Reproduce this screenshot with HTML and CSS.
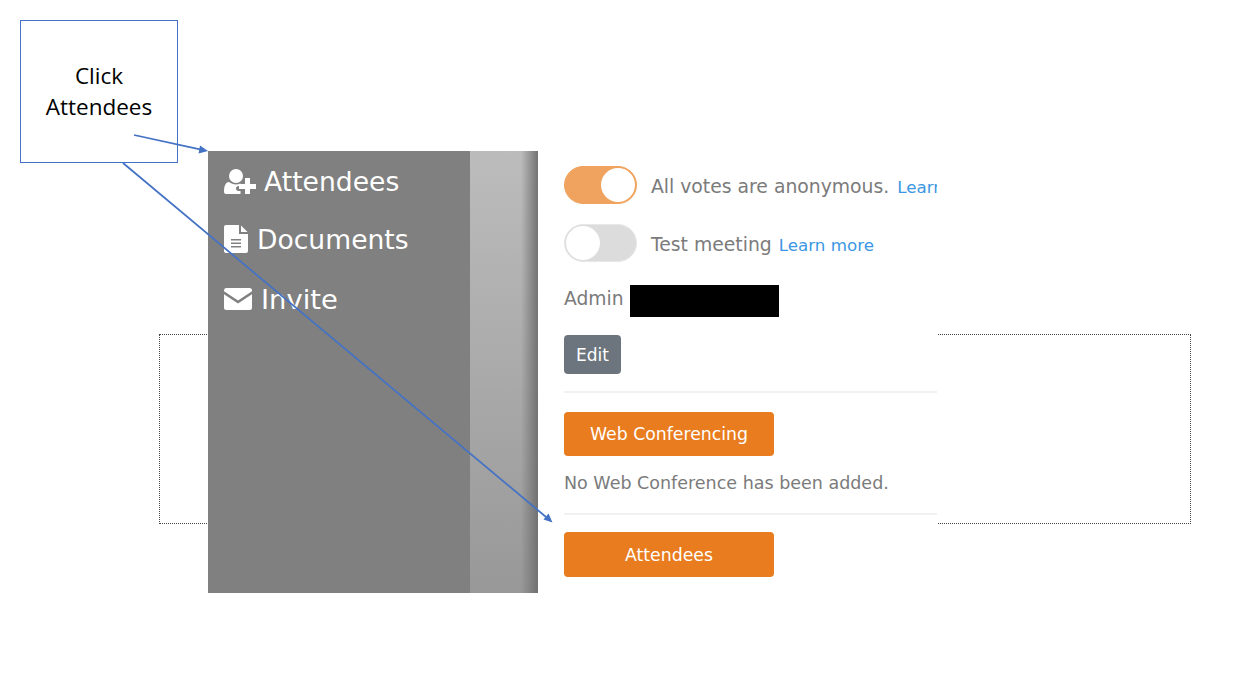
FILE: index.html
```html
<!DOCTYPE html>
<html>
<head>
  <meta charset="utf-8">
  <meta name="viewport" content="width=device-width">
  <title>Click Attendees</title>
  <link rel="stylesheet" href="styles.css">
</head>
<body>
	<div class="slide">
		<div class="dotted-box"></div>
		<div class="callout">Click<br>Attendees</div>

		<div class="shot">
			<div class="side">
				<div class="side-item item-attendees">
					<svg class="icon icon-user" viewBox="0 0 32 25">
						<circle cx="12" cy="7" r="7" fill="#fff"/>
						<path d="M2 25c-1.500 0-2-1-2-2.500 0-5 1.500-9.500 5-9.500 2 1.500 4.500 2.500 7 2.500 1.500 0 3-.3 4.500-1v2.500h-2c-1.500 0-2.500 1-2.500 2.500s1 2.500 2.500 2.500h2V25z" fill="#fff"/>
						<path d="M21 9h5v6h6v5h-6v5h-5v-5h-6v-5h6z" fill="#fff"/>
					</svg>
					<span>Attendees</span>
				</div>
				<div class="side-item item-documents">
					<svg class="icon icon-file" viewBox="0 0 24 28">
						<path fill-rule="evenodd" d="M2 0h13v9h9v17a2 2 0 0 1-2 2H2a2 2 0 0 1-2-2V2a2 2 0 0 1 2-2zM7 14v1.500h10V14zM7 17.500V19h10v-1.500zM7 21v1.500h10V21z" fill="#fff"/>
						<path d="M17 .5L23.500 7H17z" fill="#fff"/>
					</svg>
					<span>Documents</span>
				</div>
				<div class="side-item item-invite">
					<svg class="icon icon-mail" viewBox="0 0 28 22">
						<path d="M2.500 0h23A2.500 2.500 0 0 1 28 2.500v.7L14 12.500 0 3.200v-.7A2.500 2.500 0 0 1 2.500 0z" fill="#fff"/>
						<path d="M0 6.200l14 9.300 14-9.300v13.300a2.500 2.500 0 0 1-2.500 2.500h-23A2.500 2.500 0 0 1 0 19.500z" fill="#fff"/>
					</svg>
					<span>Invite</span>
				</div>
			</div>
			<div class="gutter"></div>
			<div class="content">
				<div class="switch-row row-first">
					<span class="switch on"><i></i></span>
					<span class="switch-label">All votes are anonymous. <a>Learn more</a></span>
				</div>
				<div class="switch-row row-second">
					<span class="switch"><i></i></span>
					<span class="switch-label">Test meeting <a>Learn more</a></span>
				</div>
				<div class="admin-row">
					<span class="admin-label">Admin</span>
					<span class="redacted"></span>
				</div>
				<div class="btn-edit">Edit</div>
				<div class="rule rule-one"></div>
				<div class="btn-orange">Web Conferencing</div>
				<p class="note">No Web Conference has been added.</p>
				<div class="rule rule-two"></div>
				<div class="btn-orange btn-last">Attendees</div>
			</div>
		</div>

		<svg class="arrows" viewBox="0 0 1240 695">
			<line x1="134" y1="135" x2="200" y2="149.300" stroke="#4472c4" stroke-width="1.750"/>
			<path d="M208 151L198.500 153.500L200 145.500z" fill="#4472c4"/>
			<line x1="123" y1="163" x2="546" y2="517" stroke="#4472c4" stroke-width="1.750"/>
			<path d="M552.500 522.500L543.500 519.500L548.500 513.500z" fill="#4472c4"/>
		</svg>
	</div>
</body>
</html>
```

FILE: styles.css
```css
html,body{
	margin:0;
	padding:0;
	background:#FFF;
}
.slide{
	position:relative;
	width:1240px;
	height:695px;
	overflow:hidden;
	background:#FFF;
}
.dotted-box{
	position:absolute;
	left:159px;
	top:334px;
	width:1030px;
	height:188px;
	border:1px dotted #444;
}
.callout{
	position:absolute;
	left:20px;
	top:20px;
	box-sizing:border-box;
	width:158px;
	height:143px;
	padding-bottom:2px;
	display:flex;
	align-items:center;
	justify-content:center;
	border:1px solid #4472c4;
	background:#FFF;
	color:#000;
	font-family:"Open Sans",sans-serif;
	font-size:22.5px;
	line-height:31px;
	text-align:center;
}
.shot{
	position:absolute;
	left:208px;
	top:151px;
	width:729px;
	height:442px;
	display:flex;
	background:#FFF;
	font-family:"DejaVu Sans",sans-serif;
}
.side{
	width:262px;
	background:#808080;
	color:#FFF;
	font-size:26.6px;
}
.side-item{
	display:flex;
	align-items:center;
	height:30px;
	padding-left:16px;
}
.item-attendees{
	margin-top:15px;
}
.item-documents{
	margin-top:28px;
}
.item-invite{
	margin-top:30px;
	font-size:27.4px;
}
.icon{
	flex:none;
}
.icon-user{
	width:32px;
	height:25px;
	margin-right:8px;
}
.icon-file{
	width:24px;
	height:28px;
	margin-right:9px;
}
.icon-mail{
	width:28px;
	height:22px;
	margin-right:9px;
}
.gutter{
	width:68px;
	background:
		linear-gradient(to right,rgba(110,110,110,0) 75%,rgba(110,110,110,.9) 99%,#777 100%),
		linear-gradient(to bottom,#bcbcbc,#989898);
}
.content{
	box-sizing:border-box;
	width:399px;
	padding-left:26px;
	overflow:hidden;
	color:#7b7b7b;
	font-size:17.5px;
}
.switch-row{
	display:flex;
	align-items:center;
	white-space:nowrap;
	font-size:18.8px;
}
.row-first{
	margin-top:15px;
}
.row-second{
	margin-top:20px;
}
.switch{
	flex:none;
	box-sizing:border-box;
	width:73px;
	height:38px;
	margin-right:14px;
	padding:1px;
	display:flex;
	border:1px solid #e8e8e8;
	border-radius:19px;
	background:#dcdcdc;
}
.switch i{
	display:block;
	width:34px;
	height:34px;
	border-radius:50%;
	background:#FFF;
}
.switch.on{
	justify-content:flex-end;
	border-color:#f0a35e;
	background:#f0a35e;
}
.switch-label{
	padding-top:3px;
}
.switch-label a{
	margin-left:1px;
	color:#3b97e3;
	font-size:16.7px;
}
.row-first a{
	margin-left:2px;
}
.admin-row{
	display:flex;
	align-items:center;
	height:32px;
	margin-top:23px;
}
.admin-label{
	padding-bottom:6px;
	font-size:18.7px;
}
.redacted{
	width:149px;
	height:32px;
	margin-left:6px;
	background:#000;
}
.btn-edit{
	width:57px;
	height:39px;
	margin-top:18px;
	border-radius:4px;
	background:#6c757d;
	color:#FFF;
	font-size:17px;
	line-height:40px;
	text-align:center;
}
.rule{
	height:2px;
	background:#f1f1f1;
}
.rule-one{
	margin-top:17px;
}
.btn-orange{
	width:210px;
	height:44px;
	margin-top:19px;
	border-radius:4px;
	background:#e87c1e;
	color:#FFF;
	font-size:17.3px;
	line-height:44px;
	text-align:center;
}
.btn-last{
	height:45px;
	line-height:46px;
	margin-top:17px;
}
.note{
	margin:17px 0 0;
	line-height:21px;
}
.rule-two{
	margin-top:19px;
}
.arrows{
	position:absolute;
	left:0;
	top:0;
	width:1240px;
	height:695px;
	pointer-events:none;
}
```
